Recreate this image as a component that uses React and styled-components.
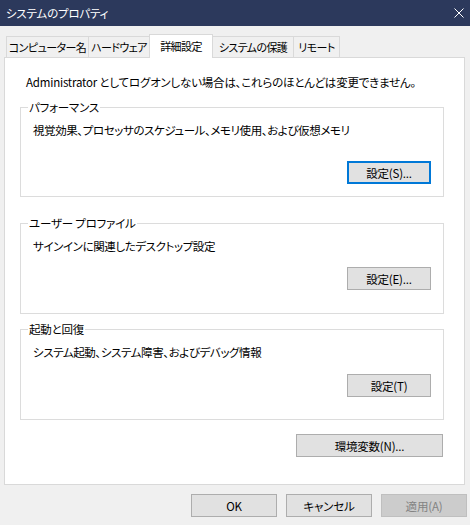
import React from 'react';
import styled, { createGlobalStyle } from 'styled-components';

const Global = createGlobalStyle`
  html, body {
    margin: 0;
    padding: 0;
    background: #f0f0f0;
  }
  body {
    font-family: "Noto Sans CJK JP", "Noto Sans", sans-serif;
    font-size: 11.5px;
    color: #000;
  }
`

const Window = styled.div`
  width: 470px;
  height: 525px;
  display: flex;
  flex-direction: column;
  background: #f0f0f0;
  overflow: hidden;
  font-feature-settings: "palt";
  letter-spacing: -0.2px;
  line-height: 16px;
`

const TitleBar = styled.div`
  height: 26px;
  flex: none;
  box-sizing: border-box;
  padding: 0 6px 0 6px;
  display: flex;
  align-items: center;
  justify-content: space-between;
  background: #2c395c;
  color: #fff;
`

const TabRow = styled.div`
  display: flex;
  align-items: flex-end;
  height: 23px;
  margin: 8px 0 0 6px;
`

const Tab = styled.div`
  position: relative;
  box-sizing: border-box;
  width: ${p => p.w}px;
  height: ${p => (p.active ? 24 : 21)}px;
  margin-left: ${p => (p.first ? 0 : -1)}px;
  margin-bottom: ${p => (p.active ? -1 : 0)}px;
  z-index: ${p => (p.active ? 2 : 1)};
  border: 1px solid #d9d9d9;
  border-bottom: 0;
  background: ${p => (p.active ? '#fff' : '#f0f0f0')};
  display: flex;
  align-items: center;
  justify-content: center;
  padding-bottom: ${p => (p.active ? 1 : 0)}px;
  font-size: 11px;
  letter-spacing: -0.6px;
  white-space: nowrap;
`

const Panel = styled.div`
  box-sizing: border-box;
  height: 428px;
  margin: 0 5px 0 4px;
  padding: 16px 20px 0 15px;
  background: #fff;
  border: 1px solid #d9d9d9;
  display: flex;
  flex-direction: column;
`

const Note = styled.div`
  margin-left: 6px;
  white-space: nowrap;
`

const Group = styled.fieldset`
  box-sizing: border-box;
  min-width: 0;
  height: ${p => p.h}px;
  margin: ${p => p.top}px 0 0 0;
  padding: 0;
  border: 1px solid #dcdcdc;
  display: flex;
  flex-direction: column;
`

const Legend = styled.legend`
  margin-left: 7px;
  padding: 0 1px;
  line-height: 16px;
`

const GroupBody = styled.div`
  display: flex;
  flex-direction: column;
  padding: 7px 12px 0 12px;
`

const Desc = styled.div`
  white-space: nowrap;
  letter-spacing: -0.4px;
`

const Button = styled.button`
  box-sizing: border-box;
  width: ${p => p.w}px;
  height: 23px;
  margin-top: ${p => p.mt || 0}px;
  margin-right: ${p => p.mr || 0}px;
  align-self: flex-end;
  padding: 0;
  font: inherit;
  font-feature-settings: "palt";
  letter-spacing: -0.2px;
  line-height: 16px;
  color: ${p => (p.disabled ? '#838383' : '#000')};
  background: ${p => (p.disabled ? '#cccccc' : '#e1e1e1')};
  border: ${p => (p.focused ? '2px solid #0078d7' : p.disabled ? '1px solid #bfbfbf' : '1px solid #adadad')};
  white-space: nowrap;
`

const Footer = styled.div`
  display: flex;
  justify-content: flex-end;
  gap: 9px;
  padding: 9px 3px 0 0;
`

const CloseIcon = () => (
  <svg width="10" height="10" viewBox="0 0 10 10">
    <path d="M0.5 0.5 L9.5 9.5 M9.5 0.5 L0.5 9.5" stroke="#fff" strokeWidth="1" fill="none" />
  </svg>
)

const tabs = [
  { label: 'コンピューター名', w: 83 },
  { label: 'ハードウェア', w: 62 },
  { label: '詳細設定', w: 64, active: true },
  { label: 'システムの保護', w: 82 },
  { label: 'リモート', w: 47 },
]

const App = () => {
  return (
    <Window>
      <Global />
      <TitleBar>
        <span>システムのプロパティ</span>
        <CloseIcon />
      </TitleBar>
      <TabRow>
        {tabs.map((t, i) => (
          <Tab key={t.label} w={t.w} active={t.active} first={i === 0}>{t.label}</Tab>
        ))}
      </TabRow>
      <Panel>
        <Note>Administrator としてログオンしない場合は、これらのほとんどは変更できません。</Note>

        <Group top={9} h={98}>
          <Legend>パフォーマンス</Legend>
          <GroupBody>
            <Desc>視覚効果、プロセッサのスケジュール、メモリ使用、および仮想メモリ</Desc>
            <Button w={84} mt={23} focused>設定(S)...</Button>
          </GroupBody>
        </Group>

        <Group top={18} h={99}>
          <Legend>ユーザー プロファイル</Legend>
          <GroupBody>
            <Desc>サインインに関連したデスクトップ設定</Desc>
            <Button w={84} mt={13}>設定(E)...</Button>
          </GroupBody>
        </Group>

        <Group top={7} h={99}>
          <Legend>起動と回復</Legend>
          <GroupBody>
            <Desc>システム起動、システム障害、およびデバッグ情報</Desc>
            <Button w={84} mt={14}>設定(T)</Button>
          </GroupBody>
        </Group>

        <Button w={147} mt={14} mr={1}>環境変数(N)...</Button>
      </Panel>
      <Footer>
        <Button w={86}>OK</Button>
        <Button w={86}>キャンセル</Button>
        <Button w={86} disabled>適用(A)</Button>
      </Footer>
    </Window>
  )
}

export default App;
